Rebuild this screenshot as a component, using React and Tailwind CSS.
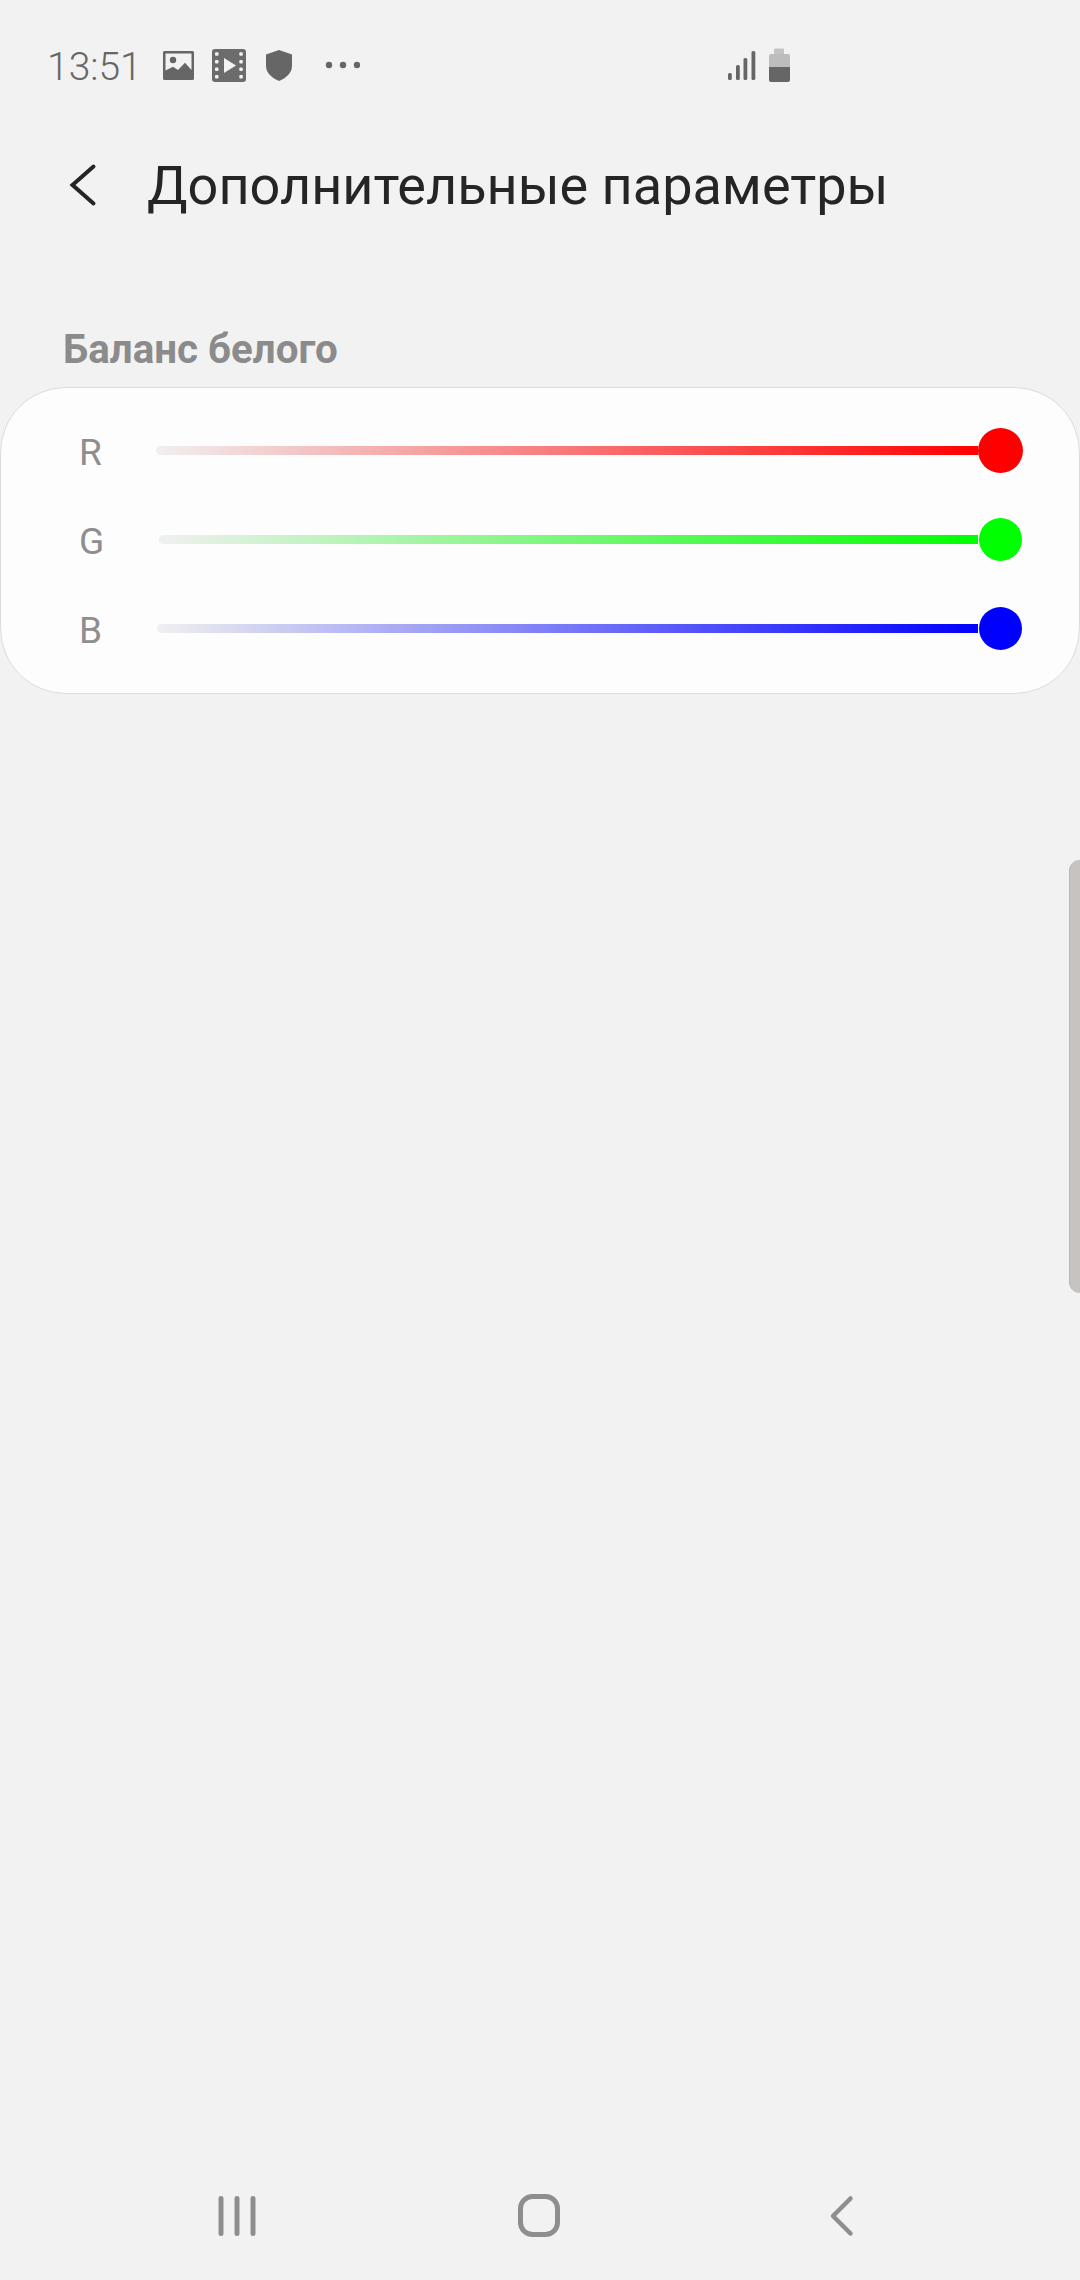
function StatusBar() {
  return (
    <div className="h-[85px] pt-[45px] pl-[47px] flex items-center text-[#666666]">
      <span className="text-[39px] leading-[40px] font-light w-[113px] mt-[4px] shrink-0">13:51</span>
      <svg width="200" height="40" viewBox="0 0 200 40" className="shrink-0">
        <path fillRule="evenodd" d="M4.500 6h28A1.500 1.500 0 0 1 34 7.500v26a1.500 1.500 0 0 1-1.500 1.500h-28A1.500 1.500 0 0 1 3 33.500v-26A1.500 1.500 0 0 1 4.500 6zM5.500 8.500V25.500L13 21.700L18 25L25 17.700L31.500 25V8.500z" fill="#666" />
        <circle cx="13" cy="15" r="3.200" fill="#666" />
        <rect x="52" y="4" width="34" height="33" rx="3" fill="#6c6c6c" />
        <g fill="#f2f2f2">
          <rect x="55" y="7.300" width="3.500" height="3.500" rx="1" /><rect x="55" y="15" width="3.500" height="3.500" rx="1" /><rect x="55" y="22.500" width="3.500" height="3.500" rx="1" /><rect x="55" y="30" width="3.500" height="3.500" rx="1" />
          <rect x="79.300" y="7.300" width="3.500" height="3.500" rx="1" /><rect x="79.300" y="15" width="3.500" height="3.500" rx="1" /><rect x="79.300" y="22.500" width="3.500" height="3.500" rx="1" /><rect x="79.300" y="30" width="3.500" height="3.500" rx="1" />
          <path d="M64 13L76 20.500L64 28z" />
        </g>
        <path d="M119 5L132 9.500V21C132 28 126 33 119 36C112 33 106 28 106 21V9.500z" fill="#666" />
        <circle cx="169" cy="20" r="3.200" fill="#666" /><circle cx="183" cy="20" r="3.200" fill="#666" /><circle cx="197" cy="20" r="3.200" fill="#666" />
      </svg>
      <svg width="70" height="40" viewBox="0 0 70 40" className="shrink-0 ml-[365px]">
        <rect x="3" y="28" width="3.800" height="7" rx="1.500" fill="#666" />
        <rect x="11" y="20" width="3.800" height="15" rx="1.500" fill="#666" />
        <rect x="18.500" y="13" width="3.800" height="22" rx="1.500" fill="#666" />
        <rect x="26.500" y="6" width="3.800" height="29" rx="1.500" fill="#666" />
        <path d="M49 4.500a1 1 0 0 1 1-1h8a1 1 0 0 1 1 1V9H49z" fill="#c4c4c4" />
        <path d="M44 11a2 2 0 0 1 2-2h17a2 2 0 0 1 2 2v11H44z" fill="#bdbdbd" />
        <path d="M44 22h21v13a2 2 0 0 1-2 2H46a2 2 0 0 1-2-2z" fill="#666" />
      </svg>
    </div>
  );
}

function Slider({ label, color, thumbClass, labelClass, trackBg }) {
  return (
    <div className="h-[89px] flex items-center">
      <span className={`text-[37px] leading-[48px] mt-[4px] text-[#8e8e8e] shrink-0 ${labelClass}`}>{label}</span>
      <div className={`h-[9px] flex-1 rounded-l-full ${trackBg}`} />
      <div className="w-[45px] shrink-0 flex justify-center">
        <div className={`rounded-full ${thumbClass} ${color}`} />
      </div>
    </div>
  );
}

export default function App() {
  return (
    <div className="w-[1080px] h-[2280px] bg-[#f2f2f2] relative overflow-hidden flex flex-col font-['Roboto',sans-serif]">
      <StatusBar />
      <div className="h-[100px] mt-[50px] flex items-center pl-[67px]">
        <svg width="32" height="44" viewBox="0 0 32 44" className="shrink-0">
          <path d="M26.500 3.500L5.500 22L26.500 40.500" fill="none" stroke="#252525" strokeWidth="4" strokeLinecap="round" strokeLinejoin="miter" />
        </svg>
        <h1 className="ml-[48px] mt-[1px] text-[54px] leading-[60px] text-[#252525] font-normal whitespace-nowrap">Дополнительные параметры</h1>
      </div>
      <div className="mt-[95px] pl-[63px] h-[57px] text-[40.3px] leading-[40px] font-bold text-[#8b8b8b]">Баланс белого</div>
      <div className="w-[1080px] h-[307px] rounded-[66px] bg-[#fdfdfd] border border-[#dcdcdc] pt-[18px] pl-[78px] pr-[56px]">
        <Slider label="R" color="bg-[#ff0000]" thumbClass="w-[45px] h-[45px]" labelClass="w-[77px]" trackBg="bg-[linear-gradient(to_right,#f0f0f0,#ff0000)]" />
        <Slider label="G" color="bg-[#00ff00]" thumbClass="w-[43px] h-[43px]" labelClass="w-[80px]" trackBg="bg-[linear-gradient(to_right,#f0f0f0,#00ff00)]" />
        <Slider label="B" color="bg-[#0000ff]" thumbClass="w-[43px] h-[43px]" labelClass="w-[78px]" trackBg="bg-[linear-gradient(to_right,#f0f0f0,#0000ff)]" />
      </div>
      <div className="absolute right-0 top-[860px] w-[11px] h-[433px] rounded-l-[12px] bg-[#c6c3c0] border-l border-[#b9b9b9]" />
      <div className="mt-auto pb-[40px] pl-[215px] flex items-center">
        <svg width="44" height="48" viewBox="0 0 44 48" className="shrink-0">
          <path d="M6 6.500V41.500M22 6.500V41.500M38 6.500V41.500" stroke="#8e8e8e" strokeWidth="5" strokeLinecap="round" fill="none" />
        </svg>
        <svg width="48" height="48" viewBox="0 0 48 48" className="shrink-0 ml-[256px]">
          <rect x="5.500" y="4.500" width="37" height="38" rx="12" stroke="#8e8e8e" strokeWidth="5" fill="none" />
        </svg>
        <svg width="32" height="48" viewBox="0 0 32 48" className="shrink-0 ml-[263px]">
          <path d="M24.500 6.500L7 24L24.500 41.500" stroke="#8e8e8e" strokeWidth="4.500" strokeLinecap="round" strokeLinejoin="round" fill="none" />
        </svg>
      </div>
    </div>
  );
}
